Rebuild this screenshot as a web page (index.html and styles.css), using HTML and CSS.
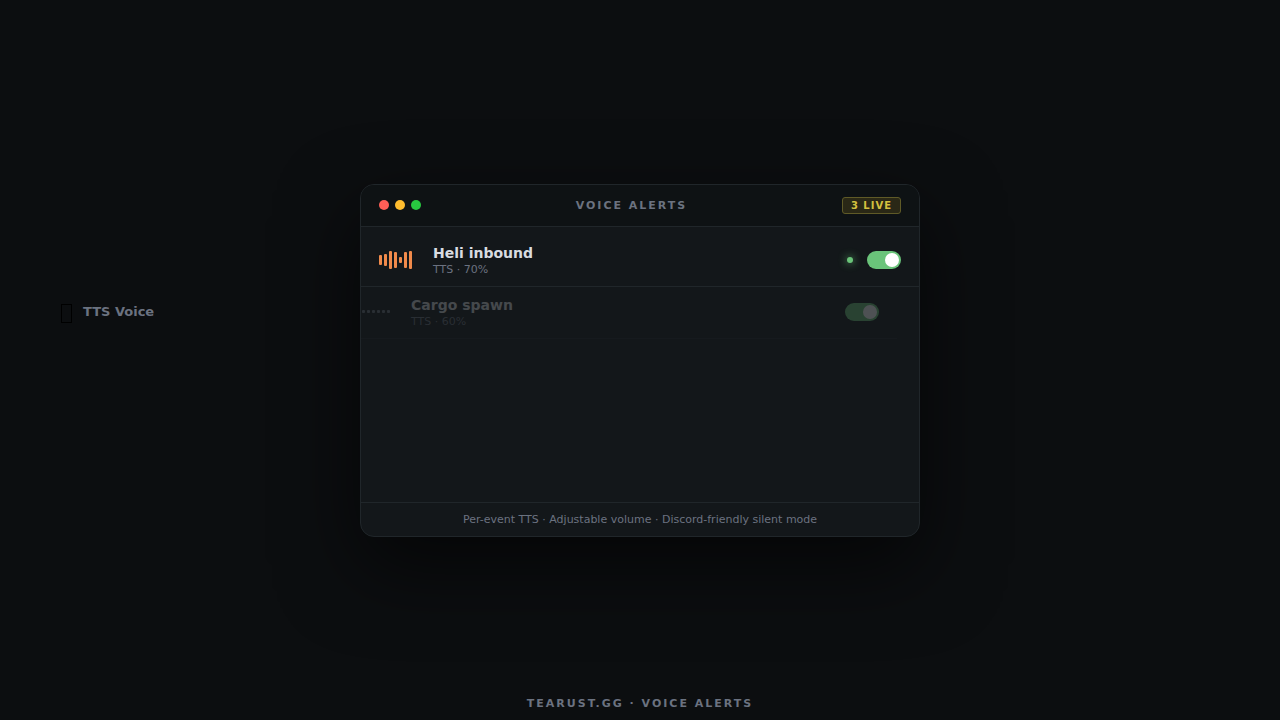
FILE: index.html
```
<!DOCTYPE html>
<html lang="en">
<head>
  <meta charset="UTF-8" />
  <title>Voice Alerts</title>
  <meta name="viewport" content="width=device-width, initial-scale=1" />
  <link rel="stylesheet" href="styles.css">
</head>
<body>

  <div class="tag">
    <span class="tag-icon"></span>
    <span>TTS Voice</span>
  </div>

  <main class="window">
    <header class="titlebar">
      <div class="lights">
        <span class="light red"></span>
        <span class="light yellow"></span>
        <span class="light green"></span>
      </div>
      <h1>VOICE ALERTS</h1>
      <span class="badge">3 LIVE</span>
    </header>

    <ul class="alerts">
      <li class="alert">
        <svg class="wave" viewBox="0 0 36 18" aria-hidden="true">
          <rect x="0" y="4" width="3" height="10" rx="1" />
          <rect x="5" y="3" width="3" height="12" rx="1" />
          <rect x="10" y="0" width="3" height="18" rx="1" />
          <rect x="15" y="1" width="3" height="16" rx="1" />
          <rect x="20" y="6" width="3" height="6" rx="1" />
          <rect x="25" y="1" width="3" height="16" rx="1" />
          <rect x="30" y="0" width="3" height="18" rx="1" />
        </svg>
        <div class="info">
          <label class="name" for="heli">Heli inbound</label>
          <div class="meta">TTS · 70%</div>
        </div>
        <span class="dot"></span>
        <input type="checkbox" class="toggle" id="heli" checked />
      </li>
      <li class="alert entering">
        <svg class="wave idle" viewBox="0 0 36 18" aria-hidden="true">
          <rect x="0" y="7" width="3" height="3" rx="1" />
          <rect x="5" y="7" width="3" height="3" rx="1" />
          <rect x="10" y="7" width="3" height="3" rx="1" />
          <rect x="15" y="7" width="3" height="3" rx="1" />
          <rect x="20" y="7" width="3" height="3" rx="1" />
          <rect x="25" y="7" width="3" height="3" rx="1" />
          <rect x="30" y="7" width="3" height="3" rx="1" />
        </svg>
        <div class="info">
          <label class="name" for="cargo">Cargo spawn</label>
          <div class="meta">TTS · 60%</div>
        </div>
        <input type="checkbox" class="toggle" id="cargo" checked />
      </li>
    </ul>

    <footer class="note">Per-event TTS · Adjustable volume · Discord-friendly silent mode</footer>
  </main>

  <div class="brand">TEARUST.GG · VOICE ALERTS</div>

</body>
</html>
```
FILE: styles.css
```
* {
  box-sizing: border-box;
}
body {
  margin: 0;
  min-height: 100vh;
  display: flex;
  justify-content: center;
  align-items: center;
  position: relative;
  overflow: hidden;
  background: #0c0e10;
  color: #d9dce1;
  font-family: 'DejaVu Sans', sans-serif;
}
.window {
  width: 100%;
  max-width: 560px;
  background: #13171a;
  border: 1px solid #20262a;
  border-radius: 14px;
  overflow: hidden;
  box-shadow: 0 30px 80px rgba(0, 0, 0, 0.6);
}
.titlebar {
  display: flex;
  justify-content: space-between;
  align-items: center;
  padding: 12px 18px;
  background: #0e1214;
  border-bottom: 1px solid #20262a;
}
.lights {
  display: flex;
  gap: 6px;
}
.light {
  width: 10px;
  height: 10px;
  border-radius: 50%;
}
.red {
  background: #ff5f57;
}
.yellow {
  background: #febc2e;
}
.green {
  background: #28c840;
}
h1 {
  margin: 0;
  font-size: 11px;
  line-height: 13px;
  letter-spacing: 2px;
  color: #6b7280;
}
.badge {
  padding: 1px 8px;
  font-size: 10px;
  line-height: 13px;
  font-weight: bold;
  letter-spacing: 1px;
  color: #d4c13f;
  background: #2a2816;
  border: 1px solid #5f5a27;
  border-radius: 3px;
}
.alerts {
  list-style: none;
  margin: 0;
  padding: 8px 0;
  min-height: 275px;
}
.alert {
  display: flex;
  align-items: center;
  gap: 14px;
  padding: 10px 18px;
  border-bottom: 1px solid #20262a;
}
/* sliding in from the left */
.entering {
  opacity: 0.25;
  transform: translateX(-22px);
}
.wave {
  width: 40px;
  height: 20px;
  padding: 1px 4px 1px 0;
  fill: #f08a4b;
}
.idle {
  fill: #6b7280;
}
.info {
  flex: 1;
}
.name {
  display: block;
  margin-bottom: 2px;
  font-size: 14px;
  line-height: 16px;
  font-weight: bold;
}
.meta {
  font-size: 11px;
  line-height: 13px;
  color: #6b7280;
}
.dot {
  width: 6px;
  height: 6px;
  border-radius: 50%;
  background: #6ac47a;
  box-shadow: 0 0 8px #6ac47a;
}
.toggle {
  appearance: none;
  display: flex;
  width: 34px;
  height: 18px;
  margin: 0;
  padding: 2px;
  border-radius: 9px;
  background: #374151;
  cursor: pointer;
}
.toggle::before {
  content: '';
  width: 14px;
  height: 14px;
  border-radius: 50%;
  background: #fff;
}
.toggle:checked {
  justify-content: flex-end;
  background: #6ac47a;
}
.note {
  padding: 10px 18px;
  border-top: 1px solid #20262a;
  font-size: 11px;
  line-height: 13px;
  text-align: center;
  color: #6b7280;
}
/* floating labels around the window */
.tag {
  position: absolute;
  left: 61px;
  top: 304px;
  display: flex;
  gap: 11px;
  font-size: 13px;
  line-height: 15px;
  font-weight: bold;
  color: #6b7280;
}
.tag-icon {
  width: 11px;
  height: 19px;
  border: 1px solid #000;
}
.brand {
  position: absolute;
  left: 0;
  right: 0;
  bottom: 10px;
  font-size: 11px;
  line-height: 13px;
  font-weight: bold;
  letter-spacing: 2px;
  text-align: center;
  color: #6b7280;
}
```
